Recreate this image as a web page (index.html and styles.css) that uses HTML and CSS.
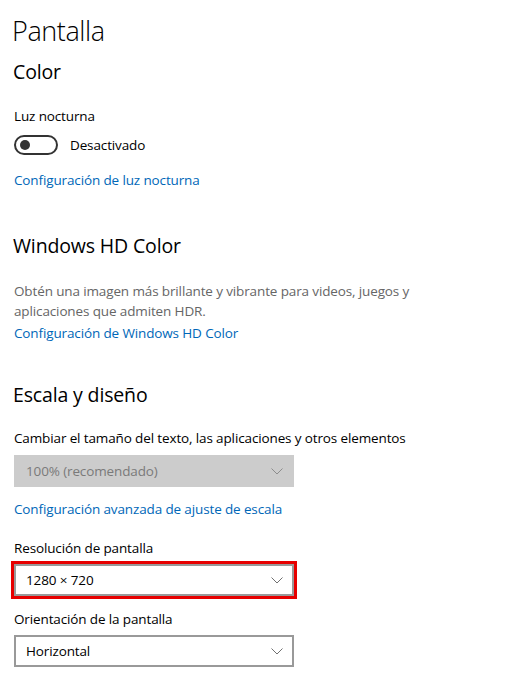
FILE: index.html
```html
<!DOCTYPE html>
<html lang="es">
<head>
<meta charset="utf-8">
<title>Pantalla</title>
<link rel="stylesheet" href="styles.css">
</head>
<body>
<main class="page">
  <h1 class="title">Pantalla</h1>

  <section class="sec sec-color">
    <h2 class="heading">Color</h2>
    <div class="label label-night">Luz nocturna</div>
    <div class="toggle-row">
      <span class="toggle"><span class="knob"></span></span>
      <span class="toggle-text">Desactivado</span>
    </div>
    <a class="link link-night" href="#">Configuración de luz nocturna</a>
  </section>

  <section class="sec sec-hd">
    <h2 class="heading">Windows HD Color</h2>
    <p class="desc">Obtén una imagen más brillante y vibrante para videos, juegos y aplicaciones que admiten HDR.</p>
    <a class="link link-hd" href="#">Configuración de Windows HD Color</a>
  </section>

  <section class="sec sec-scale">
    <h2 class="heading">Escala y diseño</h2>
    <div class="label label-size">Cambiar el tamaño del texto, las aplicaciones y otros elementos</div>
    <div class="select disabled">
      <span class="select-text">100% (recomendado)</span>
      <svg class="chev" width="12" height="7" viewBox="0 0 12 7"><polyline points="0.5,0.5 6,6 11.5,0.5" fill="none" stroke="#8c8c8c" stroke-width="1"/></svg>
    </div>
    <a class="link link-scale" href="#">Configuración avanzada de ajuste de escala</a>
    <div class="label label-res">Resolución de pantalla</div>
    <div class="select highlighted">
      <span class="select-text">1280 × 720</span>
      <svg class="chev" width="12" height="7" viewBox="0 0 12 7"><polyline points="0.5,0.5 6,6 11.5,0.5" fill="none" stroke="#707070" stroke-width="1"/></svg>
    </div>
    <div class="label label-orient">Orientación de la pantalla</div>
    <div class="select">
      <span class="select-text">Horizontal</span>
      <svg class="chev" width="12" height="7" viewBox="0 0 12 7"><polyline points="0.5,0.5 6,6 11.5,0.5" fill="none" stroke="#707070" stroke-width="1"/></svg>
    </div>
  </section>
</main>
</body>
</html>
```

FILE: styles.css
```css
* { box-sizing: border-box; }
html, body {
  margin: 0;
  padding: 0;
  background: #ffffff;
}
body {
  font-family: "Open Sans", "Noto Sans", "Liberation Sans", sans-serif;
  font-size: 13.5px;
  letter-spacing: -0.13px;
  line-height: 20px;
  color: #000;
}
.page {
  padding: 11px 0 0 14px;
  display: flex;
  flex-direction: column;
  align-items: flex-start;
}
.title {
  margin: 0 0 0 -2px;
  font-size: 27px;
  letter-spacing: -0.4px;
  line-height: 40px;
  font-weight: 300;
}
.sec {
  display: flex;
  flex-direction: column;
  align-items: flex-start;
}
.heading {
  margin: 0 0 0 -1px;
  font-size: 19.5px;
  letter-spacing: -0.15px;
  line-height: 28px;
  font-weight: 400;
}
.sec-color { margin-top: 7px; }
.sec-hd { margin-top: 42px; }
.sec-scale { margin-top: 38px; }

.label { margin: 0; }
.label-night { margin-top: 20px; }
.label-size { margin-top: 19px; }
.label-res { margin-top: 19px; }
.label-orient { margin-top: 13px; }

.toggle-row {
  margin-top: 9px;
  display: flex;
  align-items: center;
  height: 20px;
}
.toggle {
  width: 44px;
  height: 20px;
  border: 2px solid #333;
  border-radius: 10px;
  display: flex;
  align-items: center;
  padding-left: 4px;
}
.knob {
  width: 10px;
  height: 10px;
  border-radius: 50%;
  background: #333;
}
.toggle-text { margin-left: 12px; }

.link {
  color: #0067b8;
  text-decoration: none;
}
.link-night { margin-top: 15px; }
.link-hd { margin-top: 2px; }
.link-scale { margin-top: 12px; }

.desc {
  margin: 21px 0 0 0;
  width: 410px;
  color: #666;
}

.select {
  margin-top: 6px;
  width: 280px;
  height: 32px;
  border: 2px solid #999;
  display: flex;
  align-items: center;
  justify-content: space-between;
  padding: 0 9px 0 10px;
}
.select.disabled {
  margin-top: 7px;
  background: #cccccc;
  border-color: #cccccc;
  color: #7a7a7a;
}
.select.highlighted {
  outline: 3px solid #e60000;
}
.chev { display: block; }
```
